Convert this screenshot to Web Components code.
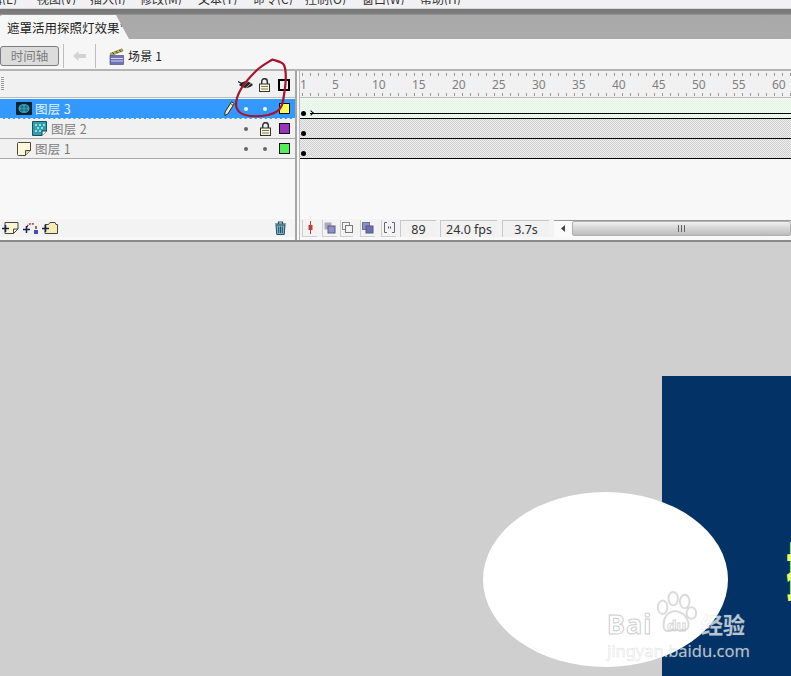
<!DOCTYPE html>
<html>
<head>
<meta charset="utf-8">
<style>
html, body { margin: 0; padding: 0; width: 791px; height: 676px; overflow: hidden; background: #cfcfcf; }
body { display: flex; flex-direction: column; font-family: "Noto Sans", "Noto Sans CJK SC", sans-serif; position: relative; }
</style>
</head>
<body>
<app-menubar></app-menubar>
<doc-tabs>遮罩活用探照灯效果*</doc-tabs>
<edit-bar></edit-bar>
<time-line>
  <layer-row slot="layers" name="图层 3" kind="mask" color="#ffff55" active></layer-row>
  <layer-row slot="layers" name="图层 2" kind="masked" color="#9933bb" locked></layer-row>
  <layer-row slot="layers" name="图层 1" kind="normal" color="#55ee55"></layer-row>
</time-line>
<stage-area></stage-area>
<red-scribble></red-scribble>

<script>
const CJK = '"Noto Sans CJK SC", "Noto Sans", sans-serif';

class AppMenubar extends HTMLElement {
  constructor() {
    super();
    this.attachShadow({ mode: 'open' });
    const items = [['编辑(E)', 59], ['视图(V)', 53], ['插入(I)', 50], ['修改(M)', 58], ['文本(T)', 55], ['命令(C)', 52], ['控制(O)', 57], ['窗口(W)', 58], ['帮助(H)', 60]];
    this.shadowRoot.innerHTML = `
      <style>
        :host { display: block; height: 9px; background: #f1f1f3; overflow: hidden; box-sizing: border-box; border-bottom: 1px solid #d8d8dc; }
        .row { display: flex; height: 5px; overflow: hidden; margin-left: -22px; font: 12px/15px ${CJK}; color: #333; }
        span { white-space: nowrap; display: block; margin-top: -9px; }
      </style>
      <div class="row">${items.map(i => `<span style="flex:none;width:${i[1]}px">${i[0]}</span>`).join('')}</div>`;
  }
}

class DocTabs extends HTMLElement {
  constructor() {
    super();
    this.attachShadow({ mode: 'open' });
    this.shadowRoot.innerHTML = `
      <style>
        :host { display: block; height: 30px; box-sizing: border-box; padding-top: 6px; background: linear-gradient(#777 0, #7d7d7d 5px, #a9a9a9 6px, #ababab 100%); }
        .tab { width: 129px; height: 24px; box-sizing: border-box; padding: 5px 0 0 7px; background: #f6f6f6; clip-path: polygon(0 1px, 2px 0, 116px 0, 129px 24px, 0 24px); font: 12.5px/16px ${CJK}; color: #222; white-space: nowrap; }
      </style>
      <div class="tab"><slot></slot></div>`;
  }
}

class EditBar extends HTMLElement {
  constructor() {
    super();
    this.attachShadow({ mode: 'open' });
    this.shadowRoot.innerHTML = `
      <style>
        :host { display: flex; align-items: center; height: 32px; box-sizing: border-box; padding-top: 4px; background: #f6f6f6; border-bottom: 2px solid #b4b4b4; font: 12px/16px ${CJK}; }
        .btn { width: 59px; height: 20px; box-sizing: border-box; border: 1px solid #7c7c7c; border-radius: 3px; background: #dcdcdc; color: #7c7c7c; text-align: center; line-height: 18px; font-size: 12.5px; }
        .sep { width: 1px; height: 24px; background: #bdbdbd; }
        svg { display: block; }
        .scene { color: #222; white-space: nowrap; letter-spacing: .2px; }
      </style>
      <div class="btn">时间轴</div>
      <div class="sep" style="margin-left:4px"></div>
      <svg style="margin-left:8px" width="15" height="12" viewBox="0 0 15 12"><path d="M1 6 6.500 1V4H14V8H6.500V11Z" fill="#d2d2d2"/></svg>
      <div class="sep" style="margin-left:8px"></div>
      <svg style="margin-left:13px" width="15" height="17" viewBox="0 0 15 17">
        <path d="M1 5.500 13 .8 14 3 2 7.500Z" fill="#b9b94a" stroke="#6f6f3a" stroke-width=".6"/>
        <path d="M3.500 4.500 5 6.200M7 3.200 8.500 5M10.500 2 12 3.700" stroke="#333" stroke-width="1"/>
        <rect x="1" y="7.500" width="13.500" height="9" fill="#6f72b8" stroke="#55557f" stroke-width=".7"/>
        <path d="M2 10.500H14M2 13H14" stroke="#d6d8ee" stroke-width="1"/>
      </svg>
      <span class="scene" style="margin-left:4px">场景 1</span>`;
  }
}

const ICONS = {
  mask: `<svg width="16" height="13" viewBox="0 0 16 13"><rect width="16" height="13" rx="1" fill="#0c2233"/><ellipse cx="8" cy="6.500" rx="5.500" ry="4.500" fill="#37a5b8"/><path d="M4 5h8M4 8h8M6 3v7M10 3v7" stroke="#0c5566" stroke-width=".7"/></svg>`,
  masked: `<svg width="15" height="15" viewBox="0 0 15 15"><path d="M.5.500H14.500V10L10 14.500H.5Z" fill="#2f9fb0" stroke="#1d4f5c"/><path d="M3 3h2v2H3zM7 3h2v2H7zM11 3h2v2h-2zM5 6h2v2H5zM9 6h2v2H9zM3 9h2v2H3zM7 9h2v2H7z" fill="#9bdbe4"/><path d="M14.500 10H10V14.500" fill="#fff" stroke="#1d3d4c"/></svg>`,
  normal: `<svg width="14" height="14" viewBox="0 0 14 14"><path d="M.5 1.500Q.5.500 1.500.500H13.500V8.500L8.500 13.500H1.500Q.5 13.500.5 12.500Z" fill="#fbf8dc" stroke="#4a4a3a"/><path d="M13.500 8.500H8.500V13.500" fill="#d9d3a8" stroke="#4a4a3a"/></svg>`
};

const LOCK = `<svg width="11" height="14" viewBox="0 0 11 14"><path d="M2.700 6V3.500a2.800 2.800 0 0 1 5.600 0V6" fill="none" stroke="#333" stroke-width="1.500"/><rect x=".5" y="6" width="10" height="7.500" fill="#fbf7d2" stroke="#333"/><path d="M2 8.500H9M2 11H9" stroke="#77776a"/></svg>`;

class LayerRow extends HTMLElement {
  connectedCallback() {
    if (this.shadowRoot) return;
    this.attachShadow({ mode: 'open' });
    const active = this.hasAttribute('active');
    const kind = this.getAttribute('kind');
    const pad = { mask: 16, masked: 32, normal: 17 }[kind];
    const gap = { mask: 3, masked: 4, normal: 4 }[kind];
    this.shadowRoot.innerHTML = `
      <style>
        :host { display: block; height: 20px; }
        .row { display: flex; align-items: center; height: 20px; box-sizing: border-box; padding-left: ${pad}px; gap: ${gap}px;
          background: ${active ? '#3399ff' : '#f1f1f1'};
          border-bottom: ${active ? '1px dashed #e4f0fb' : '1px solid #a8a8a8'};
          color: ${active ? '#e8f3ff' : '#7a7a7a'}; font: 12.500px/16px ${CJK}; }
        .name { flex: 1; white-space: nowrap; letter-spacing: .3px; }
        .tail { display: flex; align-items: center; flex: none; }
        .cell { width: 19px; display: flex; justify-content: center; align-items: center; }
        .dot { width: 4px; height: 4px; border-radius: 50%; background: ${active ? '#eef7ff' : '#666'}; }
        .swatch { width: 9px; height: 9px; border: 1px solid #111; margin: 0 5px 0 4.500px; }
        svg { display: block; flex: none; }
      </style>
      <div class="row">
        ${ICONS[kind]}
        <span class="name">${this.getAttribute('name')}</span>
        <div class="tail">
          ${active ? `<svg style="margin-right:2px" width="11" height="15" viewBox="0 0 11 15"><path d="M7.500.8 10.300 2.600 3.800 13 .9 14.500 1 11Z" fill="#f4edc2" stroke="#2c2c2c" stroke-width="1"/><path d="M6.500 2.500 9 4.200" stroke="#2c2c2c" stroke-width=".8"/></svg>` : ''}
          <div class="cell"><div class="dot"></div></div>
          <div class="cell">${this.hasAttribute('locked') ? LOCK : '<div class="dot"></div>'}</div>
          <div class="swatch" style="background:${this.getAttribute('color')}"></div>
        </div>
      </div>`;
  }
}

class FrameRow extends HTMLElement {
  connectedCallback() {
    if (this.shadowRoot) return;
    this.attachShadow({ mode: 'open' });
    const active = this.hasAttribute('active');
    const bg = active
      ? 'repeating-conic-gradient(#e2f5e2 0 25%, #f2fbf2 0 50%) 0 0/2px 2px'
      : 'repeating-conic-gradient(#cfcfcf 0 25%, #eeeeee 0 50%) 0 0/2px 2px';
    this.shadowRoot.innerHTML = `
      <style>
        :host { display: block; height: 20px; }
        .row { display: flex; align-items: center; gap: 4px; height: 20px; box-sizing: border-box; padding: 9px 0 0 1px; background: ${bg}; border-bottom: 1px solid #000; }
        .key { width: 5px; height: 5px; border-radius: 50%; background: #000; flex: none; }
        .tween { flex: 1; height: 1px; background: #000; position: relative; }
        .tween::before { content: ""; position: absolute; left: -1px; top: -2px; width: 3px; height: 3px; border: solid #000; border-width: 1px 1px 0 0; transform: rotate(45deg); }
      </style>
      <div class="row"><div class="key"></div>${active ? '<div class="tween"></div>' : ''}</div>`;
  }
}

class TimeRuler extends HTMLElement {
  constructor() {
    super();
    this.attachShadow({ mode: 'open' });
    const nums = [5, 10, 15, 20, 25, 30, 35, 40, 45, 50, 55, 60];
    this.shadowRoot.innerHTML = `
      <style>
        :host { display: block; height: 27px; box-sizing: border-box; background:
          repeating-linear-gradient(90deg, #999 0 1px, transparent 1px 8px) 2px 2px/100% 3px no-repeat,
          repeating-linear-gradient(90deg, #999 0 1px, transparent 1px 8px) 2px 22px/100% 3px no-repeat, #f1f1f1;
          border-bottom: 1px solid #bbb; }
        .nums { display: grid; grid-template-columns: 32px repeat(12, 40px); font: 12px/27px "Noto Sans", sans-serif; color: #7f7f7f; }
      </style>
      <div class="nums"><span>1</span>${nums.map(n => `<span>${n}</span>`).join('')}</div>`;
  }
}

class TimeLine extends HTMLElement {
  constructor() {
    super();
    this.attachShadow({ mode: 'open' });
    this.shadowRoot.innerHTML = `
      <style>
        :host { display: block; height: 171px; box-sizing: border-box; background: #f8f8f8; border-bottom: 2px solid #8a8a8a; overflow: hidden; }
        .grid { display: grid; grid-template-columns: 295px 1fr; height: 169px; }
        .left { display: flex; flex-direction: column; border-right: 2px solid #a6a6a6; box-sizing: content-box; width: 295px; }
        .head { height: 27px; box-sizing: border-box; background: #f1f1f1; border-bottom: 1px solid #bbb; display: flex; align-items: center; justify-content: flex-end; padding: 1px 5px 0 0; position: relative; }
        .cell { width: 19px; display: flex; justify-content: center; }
        .grip { position: absolute; left: 1px; top: 6px; width: 3px; height: 14px; background: repeating-linear-gradient(#999 0 1px, transparent 1px 2px); }
        .sq { width: 8px; height: 8px; border: 2px solid #000; margin-left: 4px; }
        .list { flex: 1; }
        .foot { height: 19px; margin-bottom: 3px; background: #f3f3f3; display: flex; align-items: center; padding: 0 8px 0 2px; gap: 1px; border-top: 1px solid #fafafa; box-sizing: border-box; }
        .right { display: flex; flex-direction: column; margin-left: 4px; border-left: 1px solid #bbb; min-width: 0; }
        .frames { flex: 1; }
        .status { height: 19px; margin-bottom: 3px; background: #f3f3f3; display: flex; align-items: center; font: 12.500px/17px "Noto Sans", sans-serif; color: #333; border-top: 1px solid #fafafa; box-sizing: border-box; }
        .btn { width: 15px; height: 17px; display: flex; align-items: center; justify-content: center; border: solid #cfcfcf; border-width: 0 0 1px 1px; box-sizing: border-box; flex: none; }
        .field { height: 17px; box-sizing: border-box; background: #f1f1f1; border: solid #c8c8c8; border-width: 1px 0 0 1px; text-align: center; flex: none; }
        .scroll { flex: 1; height: 17px; margin: 0 0 0 5px; display: flex; align-items: center; background: #fafafa; border-top: 1px solid #9a9a9a; box-sizing: border-box; min-width: 0; }
        .arrow { width: 18px; flex: none; display: flex; justify-content: center; }
        .thumb { flex: 1; height: 15px; box-sizing: border-box; border: 1px solid #b0b0b0; border-radius: 2px; background: linear-gradient(#f0f0f0, #d4d4d4 50%, #bcbcbc); display: flex; justify-content: center; align-items: center; gap: 1px; }
        .thumb i { width: 1px; height: 7px; background: #666; margin-right: 1px; }
        svg { display: block; flex: none; }
      </style>
      <div class="grid">
        <div class="left">
          <div class="head">
            <div class="grip"></div>
            <div class="cell"><svg width="16" height="11" viewBox="0 0 16 11"><path d="M1 6Q8-1.500 15 6 8 12.500 1 6Z" fill="#222"/><path d="M3 9.500 11 1.500M6 10.500 14 3.500" stroke="#d8d8d8" stroke-width=".7"/><path d="M0 2.500 5 5" stroke="#222" stroke-width="1.200"/></svg></div>
            <div class="cell">${LOCK}</div>
            <div class="sq"></div>
          </div>
          <div class="list"><div style="height:1px"></div><slot name="layers"></slot></div>
          <div class="foot">
            <svg width="17" height="14" viewBox="0 0 17 14"><path d="M3 1.500H16V8L11.500 12.500H3Z" fill="#faf6d0" stroke="#444"/><path d="M11.500 12.500V8H16" fill="none" stroke="#444"/><path d="M0 7.500H7M3.500 4V11" stroke="#12234f" stroke-width="1.500"/></svg>
            <svg style="margin-left:3px" width="16" height="14" viewBox="0 0 16 14"><path d="M4 6Q6 1 12 3.500" fill="none" stroke="#b22a3a" stroke-width="1.500" stroke-dasharray="2 1.200"/><path d="M0 8.500H7M3.500 5V12" stroke="#12234f" stroke-width="1.500"/><path d="M13 5V8" stroke="#b22a3a" stroke-width="1.500"/><rect x="11" y="9" width="4" height="4" fill="#3658a5"/></svg>
            <svg style="margin-left:2px" width="16" height="14" viewBox="0 0 16 14"><path d="M3 3.500H6.500L8 1.500H13L14 3.500H15.500V12.500H3Z" fill="#f5ecb6" stroke="#444"/><path d="M0 7.500H7M3.500 4V11" stroke="#12234f" stroke-width="1.500"/></svg>
            <div style="flex:1"></div>
            <svg width="13" height="14" viewBox="0 0 13 14"><path d="M1 3H12M4.500 3V1H8.500V3" fill="none" stroke="#21505f" stroke-width="1.200"/><path d="M2 4H11L10.200 13.500H2.800Z" fill="#7fb5cc" stroke="#21505f"/><path d="M4.700 5.500V12M6.500 5.500V12M8.300 5.500V12" stroke="#21505f"/></svg>
          </div>
        </div>
        <div class="right">
          <time-ruler></time-ruler>
          <div class="frames">
            <div style="height:1px"></div>
            <frame-row active></frame-row>
            <frame-row></frame-row>
            <frame-row></frame-row>
          </div>
          <div class="status">
            <div class="btn" style="margin-left:2px"><svg width="7" height="13" viewBox="0 0 7 13"><path d="M3.500 0V13" stroke="#c43a3a"/><rect x="1.500" y="4" width="4" height="5" fill="#c43a3a"/></svg></div>
            <div class="btn" style="margin-left:5px"><svg width="12" height="12" viewBox="0 0 12 12"><rect x=".5" y=".5" width="7" height="7" fill="#aab"/><rect x="4" y="4" width="7" height="7" fill="#8d90c4" stroke="#555a80"/></svg></div>
            <div class="btn" style="margin-left:3px;width:13px"><svg width="11" height="11" viewBox="0 0 11 11"><rect x=".5" y=".5" width="7" height="7" fill="none" stroke="#888"/><rect x="3.500" y="3.500" width="7" height="7" fill="#f3f3f3" stroke="#777"/></svg></div>
            <div class="btn" style="margin-left:7px"><svg width="12" height="12" viewBox="0 0 12 12"><rect x=".5" y=".5" width="7" height="7" fill="#8d90c4" stroke="#6a6e9c"/><rect x="4" y="4" width="7" height="7" fill="#6a6fb5" stroke="#555a80"/></svg></div>
            <div class="btn" style="margin-left:6px"><svg width="11" height="11" viewBox="0 0 11 11"><path d="M3 .5H.5V10.500H3M8 .5H10.500V10.500H8" fill="none" stroke="#667"/><path d="M4 5.500H4.800M6.200 5.500H7" stroke="#223" stroke-width="2"/></svg></div>
            <div class="field" style="margin-left:4px;width:36px">89</div>
            <div class="field" style="margin-left:4px;width:57px">24.0 fps</div>
            <div class="field" style="margin-left:5px;width:47px">3.7s</div>
            <div class="scroll">
              <div class="arrow"><svg width="4" height="7" viewBox="0 0 4 7"><path d="M4 0V7L0 3.500Z" fill="#444"/></svg></div>
              <div class="thumb"><i></i><i></i><i></i></div>
            </div>
          </div>
        </div>
      </div>`;
  }
}

class StageArea extends HTMLElement {
  constructor() {
    super();
    this.attachShadow({ mode: 'open' });
    this.shadowRoot.innerHTML = `
      <style>
        :host { display: block; flex: 1; position: relative; overflow: hidden; background: #cfcfcf; }
        .movie { position: absolute; left: 662px; top: 134px; width: 129px; height: 300px; background: #033366; overflow: hidden; }
        .glyph { position: absolute; left: 124px; top: 155px; font: 700 62px/76px ${CJK}; color: #f4f96a; white-space: nowrap; transform: scaleX(.45); transform-origin: 0 0; }
        .spot { position: absolute; left: 483px; top: 250px; width: 245px; height: 175px; border-radius: 50%; background: #fff; }
        .mark { position: absolute; white-space: nowrap; }
        .bai { left: 607px; top: 365px; font: 700 27px/34px "Noto Sans", sans-serif; letter-spacing: 1px; color: rgba(255,255,255,.6); -webkit-text-stroke: 1px rgba(170,170,170,.6); }
        .du { left: 667px; top: 373px; font: 700 15px/20px "Noto Sans", sans-serif; color: rgba(255,255,255,.6); -webkit-text-stroke: 1px rgba(170,170,170,.5); }
        .jy { left: 701px; top: 366px; font: 700 22px/30px ${CJK}; color: rgba(255,255,255,.72); -webkit-text-stroke: .5px rgba(170,170,170,.3); }
        .url { left: 607px; top: 398px; font: 16.500px/22px "Noto Sans", sans-serif; color: rgba(255,255,255,.72); -webkit-text-stroke: .5px rgba(170,170,170,.4); }
        svg { position: absolute; left: 653px; top: 348px; }
      </style>
      <div class="movie"><div class="glyph">探</div></div>
      <div class="spot"></div>
      <svg width="48" height="48" viewBox="0 0 50 50" fill="none" stroke="rgba(170,170,170,.42)" stroke-width="2">
        <ellipse cx="10" cy="18" rx="5" ry="7"/><ellipse cx="21" cy="9" rx="5" ry="7"/><ellipse cx="33" cy="12" rx="5" ry="7"/><ellipse cx="40" cy="24" rx="5" ry="6"/>
        <path d="M11 37Q11 24 22 22 33 22 37 34 38 44 27 42 20 40 16 43 11 43 11 37Z"/>
      </svg>
      <span class="mark bai">Bai</span>
      <span class="mark du">du</span>
      <span class="mark jy">经验</span>
      <span class="mark url">jingyan.baidu.com</span>`;
  }
}

class RedScribble extends HTMLElement {
  constructor() {
    super();
    this.attachShadow({ mode: 'open' });
    this.shadowRoot.innerHTML = `
      <style>
        :host { position: absolute; left: 230px; top: 54px; width: 62px; height: 66px; display: block; }
        svg { display: block; }
      </style>
      <svg width="62" height="66" viewBox="230 54 62 66" fill="none"><path d="M272.500 59.500C276 61 282 61.500 284 65 286.500 71 285.500 84 285 88 284 95 283.500 101 281.500 106 279 112 273 113.500 268 115 260 116.500 251 116.500 245 115 240 113.500 236.500 110 236 105 236 100 238 94 241 89 245 82 251 76 256 71 261 66 267 63 272.500 59.500Z" stroke="#a8142c" stroke-width="2.200" stroke-linejoin="round"/></svg>`;
  }
}

customElements.define('app-menubar', AppMenubar);
customElements.define('doc-tabs', DocTabs);
customElements.define('edit-bar', EditBar);
customElements.define('layer-row', LayerRow);
customElements.define('frame-row', FrameRow);
customElements.define('time-line', TimeLine);
customElements.define('time-ruler', TimeRuler);
customElements.define('stage-area', StageArea);
customElements.define('red-scribble', RedScribble);
</script>
</body>
</html>
